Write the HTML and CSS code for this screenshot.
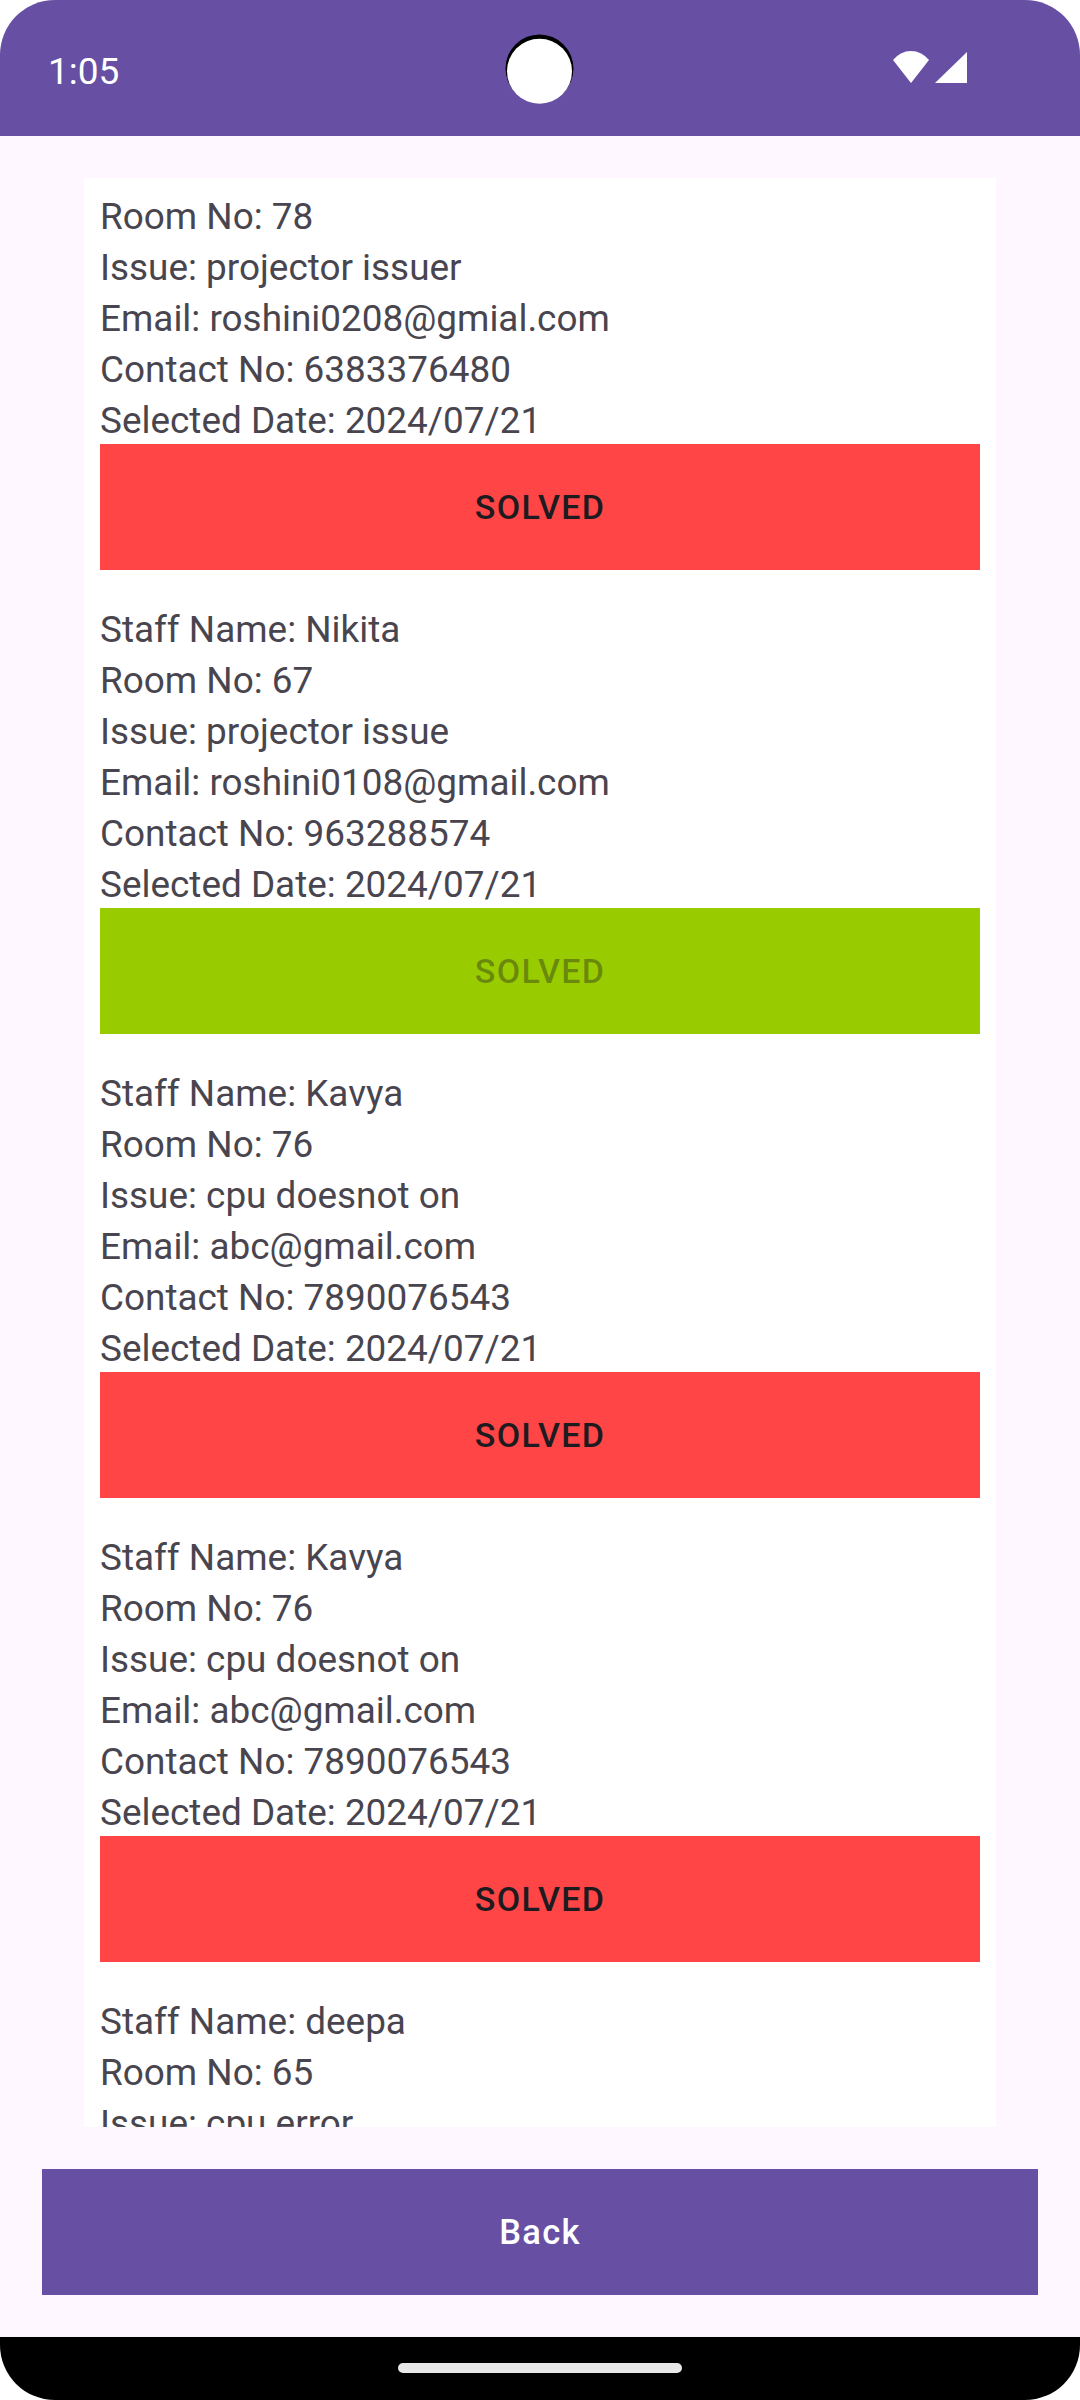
FILE: index.html
```html
<!DOCTYPE html>
<html lang="en">
<head>
<meta charset="utf-8">
<title>Complaints</title>
<link rel="stylesheet" href="styles.css">
</head>
<body>
<div class="screen">
  <header class="statusbar">
    <span class="clock">1:05</span>
    <svg class="camera" width="70" height="72" viewBox="0 0 70 72" aria-hidden="true">
      <circle cx="34.5" cy="34.5" r="34" fill="#000"/>
      <circle cx="34.5" cy="37.3" r="32.5" fill="#fff"/>
    </svg>
    <svg class="sysicons" width="75" height="33" viewBox="0 0 75 33" aria-hidden="true">
      <path d="M19 32 L1 9 A22.5 22.5 0 0 1 37 9 Z" fill="#fff"/>
      <path d="M43 32 L75 1 L75 32 Z" fill="#fff"/>
    </svg>
  </header>

  <main class="main">
    <section class="card">
      <div class="list">
        <article class="item">
          <p class="line">Staff Name: Roshini</p>
          <p class="line">Room No: 78</p>
          <p class="line">Issue: projector issuer</p>
          <p class="line">Email: roshini0208@gmial.com</p>
          <p class="line">Contact No: 6383376480</p>
          <p class="line">Selected Date: 2024/07/21</p>
          <button class="solved solved-red">SOLVED</button>
        </article>
        <article class="item">
          <p class="line">Staff Name: Nikita</p>
          <p class="line">Room No: 67</p>
          <p class="line">Issue: projector issue</p>
          <p class="line">Email: roshini0108@gmail.com</p>
          <p class="line">Contact No: 963288574</p>
          <p class="line">Selected Date: 2024/07/21</p>
          <button class="solved solved-green" disabled>SOLVED</button>
        </article>
        <article class="item">
          <p class="line">Staff Name: Kavya</p>
          <p class="line">Room No: 76</p>
          <p class="line">Issue: cpu doesnot on</p>
          <p class="line">Email: abc@gmail.com</p>
          <p class="line">Contact No: 7890076543</p>
          <p class="line">Selected Date: 2024/07/21</p>
          <button class="solved solved-red">SOLVED</button>
        </article>
        <article class="item">
          <p class="line">Staff Name: Kavya</p>
          <p class="line">Room No: 76</p>
          <p class="line">Issue: cpu doesnot on</p>
          <p class="line">Email: abc@gmail.com</p>
          <p class="line">Contact No: 7890076543</p>
          <p class="line">Selected Date: 2024/07/21</p>
          <button class="solved solved-red">SOLVED</button>
        </article>
        <article class="item">
          <p class="line">Staff Name: deepa</p>
          <p class="line">Room No: 65</p>
          <p class="line">Issue: cpu error</p>
          <p class="line">Email: deepa@gmail.com</p>
          <p class="line">Contact No: 9876543210</p>
          <p class="line">Selected Date: 2024/07/21</p>
          <button class="solved solved-red">SOLVED</button>
        </article>
      </div>
    </section>
    <button class="back">Back</button>
  </main>

  <footer class="navbar">
    <span class="pill"></span>
  </footer>
</div>
</body>
</html>
```

FILE: styles.css
```css
* {
  box-sizing: border-box;
}

html, body {
  margin: 0;
  padding: 0;
  background: #ffffff;
}

body {
  font-family: Roboto, "Noto Sans", "Liberation Sans", sans-serif;
}

.screen {
  width: 1080px;
  height: 2400px;
  border-radius: 55px;
  overflow: hidden;
  background: #FEF7FF;
  display: flex;
  flex-direction: column;
}

.statusbar {
  position: relative;
  height: 136px;
  flex: 0 0 136px;
  background: #6750A4;
  display: flex;
  align-items: center;
  justify-content: space-between;
  padding: 0 113px 0 48px;
}

.clock {
  color: #ffffff;
  font-size: 37px;
  line-height: 37px;
  padding-top: 6px;
  letter-spacing: 0;
}

.camera {
  position: absolute;
  left: 505px;
  top: 34px;
}

.sysicons {
  display: block;
  margin-top: -2px;
}

.main {
  flex: 1 1 auto;
  display: flex;
  flex-direction: column;
  gap: 42px;
  padding: 42px;
  min-height: 0;
}

.card {
  flex: 1 1 auto;
  min-height: 0;
  margin: 0 42px;
  background: #ffffff;
  overflow: hidden;
  padding: 0 16px;
}

.list {
  margin-top: -42px;
}

.item {
  display: flex;
  flex-direction: column;
}

.line {
  margin: 8px 0 0 0;
  height: 43px;
  font-size: 36.9px;
  line-height: 43px;
  color: #49454F;
  white-space: nowrap;
}

.solved {
  margin: 2px 0 30px 0;
  height: 126px;
  border: none;
  border-radius: 0;
  font-family: Roboto, "Noto Sans", "Liberation Sans", sans-serif;
  font-size: 34px;
  font-weight: 500;
  letter-spacing: 1.3px;
  color: #1D1B20;
  padding: 0;
}

.solved-red {
  background: #FF4545;
}

.solved-green {
  background: #99CC00;
  color: rgba(29, 27, 32, 0.38);
}

.back {
  flex: 0 0 126px;
  height: 126px;
  border: none;
  border-radius: 0;
  background: #6750A4;
  color: #ffffff;
  font-family: Roboto, "Noto Sans", "Liberation Sans", sans-serif;
  font-size: 34.5px;
  font-weight: 500;
  letter-spacing: 1.3px;
  padding: 0;
}

.navbar {
  flex: 0 0 63px;
  height: 63px;
  background: #000000;
  display: flex;
  justify-content: center;
  padding-top: 26px;
}

.pill {
  display: block;
  width: 284px;
  height: 10px;
  border-radius: 5px;
  background: #E8E8E8;
}
```
